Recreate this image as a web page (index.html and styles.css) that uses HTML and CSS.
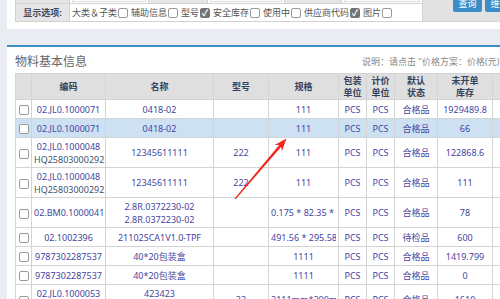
FILE: index.html
```html
<!DOCTYPE html>
<html lang="zh-CN">
<head>
  <meta charset="UTF-8" />
  <meta name="viewport" content="width=device-width, initial-scale=1" />
  <title>物料基本信息</title>
  <link rel="stylesheet" href="styles.css">
</head>
<body>
  <div class="filter-panel">
    <div class="filter-grid">
      <div class="f-label">编码：</div>
      <div class="f-input"><span class="box"></span></div>
      <div class="f-label">名称：</div>
      <div class="f-input"><span class="box"></span></div>
      <div class="f-label">规格：</div>
      <div class="f-input"><span class="box"></span></div>
      <div class="f-actions">
        <button class="btn">查询</button>
        <button class="btn">维护</button>
      </div>
      <div class="f-label">显示选项:</div>
      <div class="f-options">
        <label>大类＆子类<span class="cb"></span></label>
        <label>辅助信息<span class="cb"></span></label>
        <label>型号<span class="cb checked">✓</span></label>
        <label>安全库存<span class="cb"></span></label>
        <label>使用中<span class="cb"></span></label>
        <label>供应商代码<span class="cb checked">✓</span></label>
        <label>图片<span class="cb"></span></label>
      </div>
    </div>
  </div>

  <div class="panel">
    <div class="panel-head">
      <span class="panel-title">物料基本信息</span>
      <span class="panel-desc">说明：请点击 "价格方案：价格(元)" 查看明细</span>
    </div>
    <table class="grid">
      <colgroup>
        <col style="width:16px"><col style="width:74px"><col style="width:108px">
        <col style="width:55px"><col style="width:70px"><col style="width:28px">
        <col style="width:28px"><col style="width:43px"><col style="width:55px">
        <col style="width:80px">
      </colgroup>
      <thead>
        <tr>
          <th></th><th>编码</th><th>名称</th><th>型号</th><th>规格</th>
          <th>包装<br>单位</th><th>计价<br>单位</th><th>默认<br>状态</th><th>未开单<br>库存</th><th></th>
        </tr>
      </thead>
      <tbody>
        <tr>
          <td><span class="cb"></span></td><td>02.JL0.1000071</td><td>0418-02</td><td></td>
          <td><div class="clip">111</div></td><td>PCS</td><td>PCS</td><td>合格品</td><td>1929489.8</td><td></td>
        </tr>
        <tr class="selected">
          <td><span class="cb"></span></td><td>02.JL0.1000071</td><td>0418-02</td><td></td>
          <td><div class="clip">111</div></td><td>PCS</td><td>PCS</td><td>合格品</td><td>66</td><td></td>
        </tr>
        <tr>
          <td><span class="cb"></span></td><td>02.JL0.1000048<br><span class="sub">HQ25803000292</span></td><td>12345611111</td><td>222</td>
          <td><div class="clip">111</div></td><td>PCS</td><td>PCS</td><td>合格品</td><td>122868.6</td><td></td>
        </tr>
        <tr>
          <td><span class="cb"></span></td><td>02.JL0.1000048<br><span class="sub">HQ25803000292</span></td><td>12345611111</td><td>222</td>
          <td><div class="clip">111</div></td><td>PCS</td><td>PCS</td><td>合格品</td><td>111</td><td></td>
        </tr>
        <tr>
          <td><span class="cb"></span></td><td>02.BM0.1000041</td><td>2.8R.0372230-02<br>2.8R.0372230-02</td><td></td>
          <td><div class="clip">0.175 * 82.35 * 500</div></td><td>PCS</td><td>PCS</td><td>合格品</td><td>78</td><td></td>
        </tr>
        <tr>
          <td><span class="cb"></span></td><td>02.1002396</td><td>21102SCA1V1.0-TPF</td><td></td>
          <td><div class="clip">491.56 * 295.58</div></td><td>PCS</td><td>PCS</td><td>待检品</td><td>600</td><td></td>
        </tr>
        <tr>
          <td><span class="cb"></span></td><td>9787302287537</td><td>40*20包装盒</td><td></td>
          <td><div class="clip">1111</div></td><td>PCS</td><td>PCS</td><td>合格品</td><td>1419.799</td><td></td>
        </tr>
        <tr>
          <td><span class="cb"></span></td><td>9787302287537</td><td>40*20包装盒</td><td></td>
          <td><div class="clip">1111</div></td><td>PCS</td><td>PCS</td><td>合格品</td><td>0</td><td></td>
        </tr>
        <tr>
          <td><span class="cb"></span></td><td>02.JL0.1000053<br><span class="sub">HQ25803000310</span></td><td>423423<br>423423</td><td>33</td>
          <td><div class="clip">2111mm*200mm</div></td><td>PCS</td><td>PCS</td><td>合格品</td><td>1610</td><td></td>
        </tr>
      </tbody>
    </table>
  </div>

  <svg class="arrow" width="500" height="299" viewBox="0 0 500 299">
    <polygon points="234.6,198.6 279.2,145.1 274.6,145.0 286.5,138.5 281.9,151.3 281.2,146.7 235.4,199.4" fill="#f2261d"/>
  </svg>
</body>
</html>
```

FILE: styles.css
```css
html, body {
  margin: 0;
  padding: 0;
  background: #e9ecf0;
  width: 100%;
  height: 100%;
  overflow: hidden;
  font-family: "Noto Sans", "Noto Sans CJK SC", sans-serif;
  font-size: 9px;
  color: #555;
}
.filter-panel {
  background: #fff;
  margin: -18px 0 0 7px;
  padding: 0 0 7px 8px;
}
.filter-grid {
  display: grid;
  grid-template-columns: 53px 78px 58px 76px 56px 80px 1fr;
  grid-template-rows: 20px 17px;
  gap: 1px;
  background: #d2d2d2;
  border: 1px solid #d2d2d2;
  border-right: none;
}
.f-label {
  background: #e6e6e6;
  font-weight: bold;
  color: #3e4a63;
  display: flex;
  align-items: center;
  justify-content: center;
}
.f-input {
  background: #fff;
  padding: 1px 2px;
}
.f-input .box {
  display: block;
  height: 100%;
  box-sizing: border-box;
  border: 1px solid #ddd;
}
.f-actions {
  grid-row: span 2;
  background: #e2e2e2;
  display: flex;
  gap: 3px;
  padding: 13px 0 0 30px;
  align-items: flex-start;
}
.btn {
  width: 29px;
  height: 16px;
  padding: 0;
  border: none;
  border-radius: 2px;
  background: #3a8dc6;
  color: #fff;
  font: inherit;
  line-height: 16px;
  flex: none;
}
.f-options {
  grid-column: span 5;
  background: #fff;
  display: flex;
  align-items: center;
  gap: 3px;
  padding-left: 2px;
  white-space: nowrap;
}
.f-options label {
  display: flex;
  align-items: center;
  gap: 1px;
}
.cb {
  display: inline-block;
  width: 10px;
  height: 10px;
  box-sizing: border-box;
  border: 1px solid #999;
  border-radius: 2px;
  background: #fff;
  vertical-align: middle;
}
.cb.checked {
  background: #747474;
  border-color: #747474;
  color: #fff;
  font-size: 9px;
  line-height: 8px;
  text-align: center;
  font-weight: bold;
}
.panel {
  margin: 16px 0 0 7px;
  border-top: 2px solid #3c8dc4;
  background: #fff;
  padding-left: 8px;
  height: 400px;
}
.panel-head {
  height: 26px;
  box-sizing: border-box;
  padding-top: 2px;
  display: flex;
  align-items: center;
  white-space: nowrap;
}
.panel-title {
  font-size: 12px;
  color: #666;
}
.panel-desc {
  margin-left: 275px;
  color: #888;
}
.grid {
  border-collapse: collapse;
  table-layout: fixed;
  width: 557px;
}
.grid th, .grid td {
  border: 1px solid #d4d4d4;
  text-align: center;
  padding: 1.5px 2px;
  line-height: 13px;
  white-space: nowrap;
  overflow: hidden;
}
.grid th {
  background: #dfdfdf;
  color: #34425e;
  font-weight: bold;
  line-height: 12px;
  height: 26px;
  padding: 0 1px;
  box-sizing: border-box;
}
.grid td {
  color: #4545a0;
  height: 19px;
  box-sizing: border-box;
}
.grid td:first-child {
  padding: 0;
}
.grid .sub {
  color: #3c5470;
}
.grid tr.selected td {
  background: #cde1f3;
}
.clip {
  overflow: hidden;
}
.arrow {
  position: absolute;
  left: 0;
  top: 0;
  pointer-events: none;
}
```
